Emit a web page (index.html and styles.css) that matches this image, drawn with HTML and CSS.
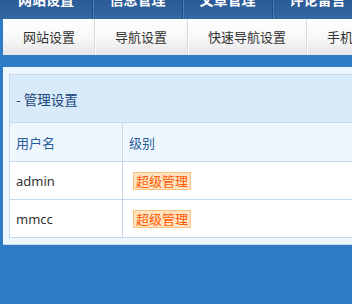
FILE: index.html
```html
<!DOCTYPE html>
<html lang="zh-CN">
  <head>
    <meta charset="UTF-8" />
    <meta name="viewport" content="width=device-width, initial-scale=1.0" />
    <title>管理设置</title>
    <link rel="stylesheet" href="styles.css">
  </head>
  <body>
    <div class="topnav">
      <a class="first">网站设置</a>
      <a>信息管理</a>
      <a>文章管理</a>
      <a>评论留言</a>
    </div>
    <div class="subnav">
      <a>网站设置</a>
      <a>导航设置</a>
      <a>快速导航设置</a>
      <a>手机版设置</a>
    </div>

    <div class="panel">
      <table>
        <thead>
          <tr class="title">
            <th colspan="2">- 管理设置</th>
          </tr>
          <tr class="cols">
            <th class="name">用户名</th>
            <th>级别</th>
          </tr>
        </thead>
        <tbody>
          <tr>
            <td>admin</td>
            <td><span class="badge">超级管理</span></td>
          </tr>
          <tr>
            <td>mmcc</td>
            <td><span class="badge">超级管理</span></td>
          </tr>
        </tbody>
      </table>
    </div>
  </body>
</html>
```

FILE: styles.css
```css
html,
body {
  overflow: hidden;
}
body {
  margin: 0;
  width: 700px;
  font-family: "Noto Sans CJK SC", "Noto Sans", sans-serif;
  font-size: 13px;
  background-color: #2f7bc7;
}
.topnav {
  display: flex;
  height: 19px;
  overflow: hidden;
  background: linear-gradient(#2a5b97, #33679f);
}
.topnav a {
  width: 89px;
  margin-top: -11px;
  line-height: 20px;
  text-align: center;
  font-size: 14px;
  font-weight: bold;
  color: #fff;
  border-right: 1px solid #244f85;
  box-shadow: 1px 0 0 #4a7bb1;
}
.topnav a.first {
  width: 92px;
}
.subnav {
  display: flex;
  margin-left: 3px;
  height: 36px;
  background: linear-gradient(#ffffff, #f7f7f7 55%, #e6e6e6);
}
.subnav a {
  padding: 0 20px 0 20px;
  line-height: 36px;
  color: #333;
  border-right: 1px solid #dadada;
  box-shadow: 1px 0 0 #ffffff;
}
.subnav a:first-child {
  padding-left: 20px;
  padding-right: 19px;
}
.panel {
  margin: 12px 0 0 3px;
  padding: 7px 6px 6px 6px;
  background: #edf5fd;
  border-bottom: 1px solid #c8dcf0;
}
table {
  width: 100%;
  border-collapse: collapse;
}
th,
td {
  border: 1px solid #c4d8ee;
  text-align: left;
  font-weight: normal;
  padding: 0 0 0 6px;
}
.title th {
  height: 47px;
  background: #d9ebfa;
  color: #1a4679;
  font-size: 13.5px;
}
.cols th {
  height: 38px;
  background: #eef6fe;
  color: #2a5d9c;
}
.cols th.name {
  width: 106px;
}
td {
  height: 37px;
  background: #fff;
  color: #333;
  font-family: "Noto Sans", "Noto Sans CJK SC", sans-serif;
}
.badge {
  display: inline-block;
  margin-left: 4px;
  padding: 0 2px;
  line-height: 16px;
  background: #ffe3c2;
  border: 1px solid #f8c27c;
  color: #ff5a00;
  font-family: "Noto Sans CJK SC", sans-serif;
}
```
